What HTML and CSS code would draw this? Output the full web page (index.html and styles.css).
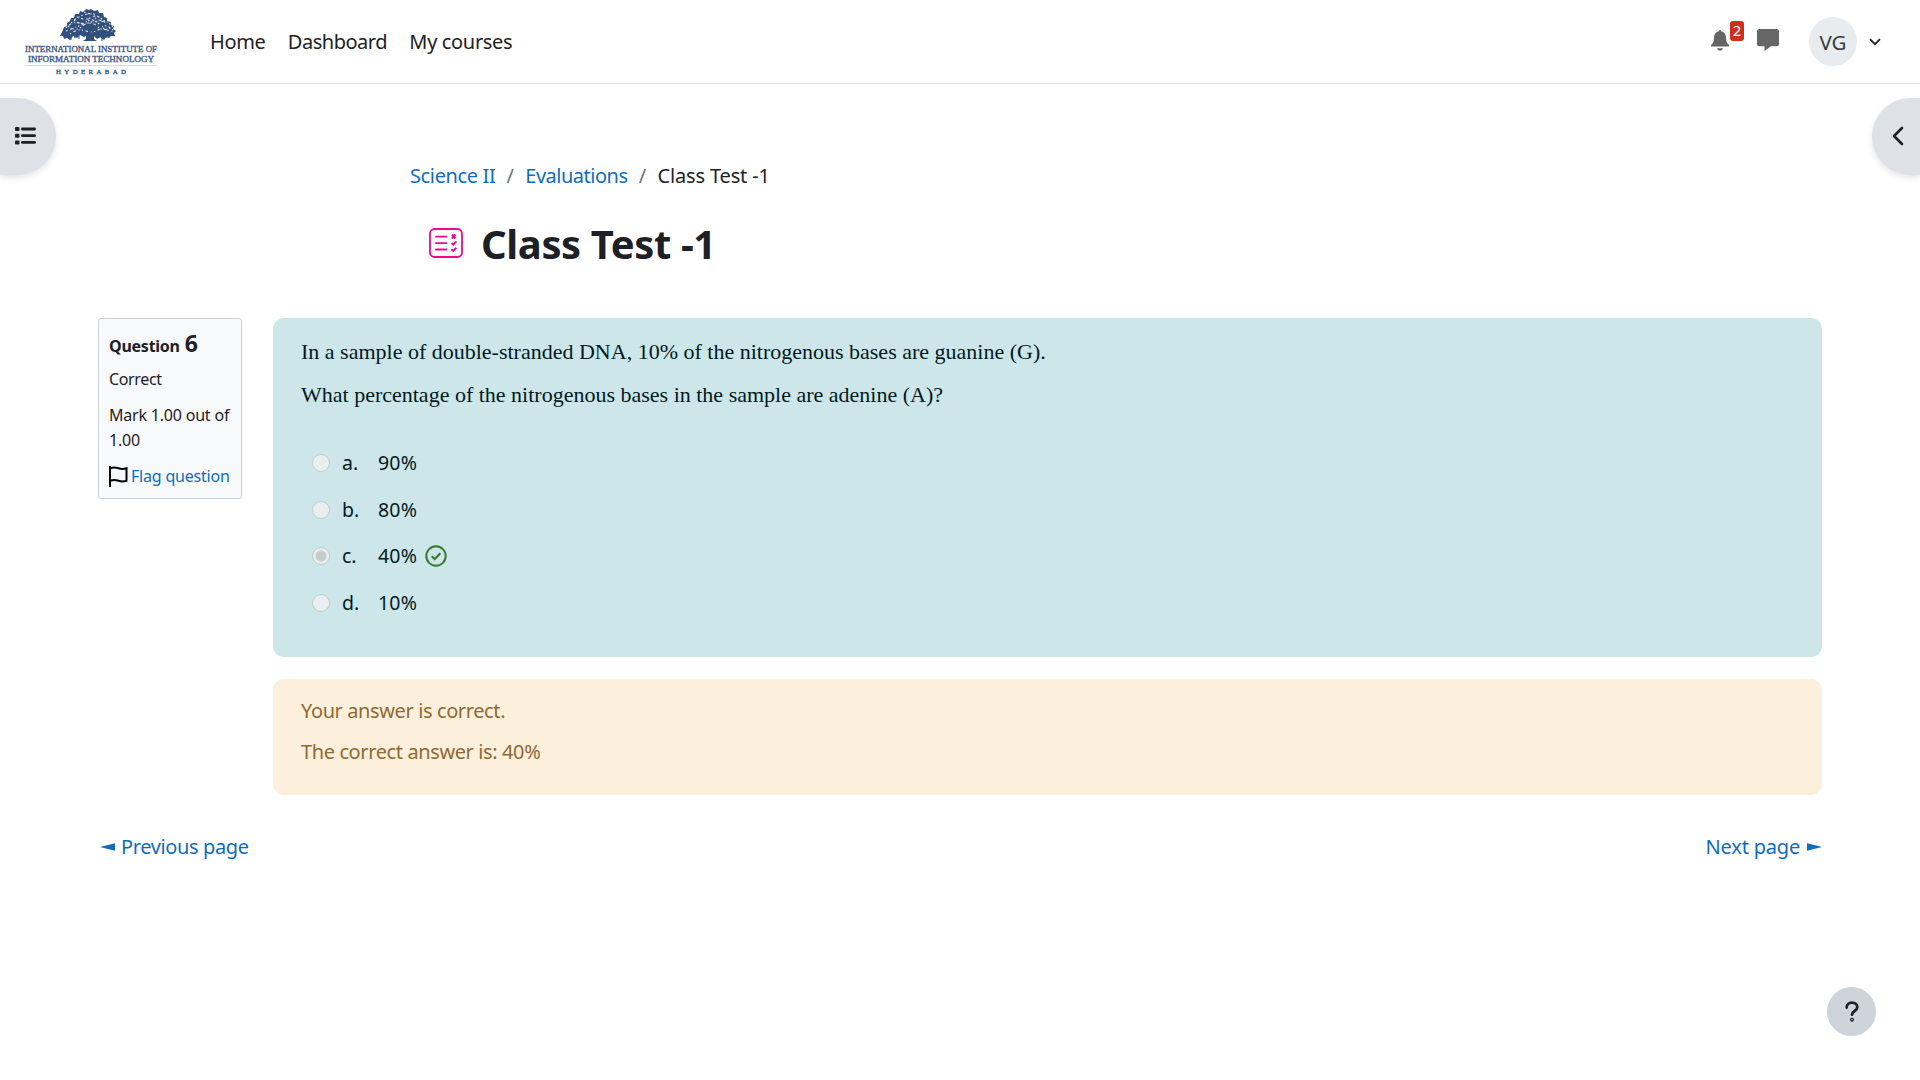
FILE: index.html
```
<!DOCTYPE html>
<html lang="en">
<head>
<meta charset="utf-8">
<title>Class Test -1</title>
<link rel="stylesheet" href="styles.css">
</head>
<body>
<header class="navbar">
  <a class="brand">
    <svg width="134" height="68" viewBox="24 8 134 68">
      <g fill="#33507c">
        <path d="M63 30l1-3 3-1v-3l3-2 1-3 3 0 1-4 4 0 1-3 3 1 3-3 3 1 2-1 3 2 4-1 1 3 4 0 1 4 3 1 0 3 4 1 0 3 3 1-1 3 3 2-2 2 1 3-4 0-2 2-3-1-2 3-4-3-3 2-3-3-3 1-3-2-4 2-4-2-3 3-4-2-3 4-3-2-3 1-1-3-3 0z"/>
        <path d="M80 30l4 3 2 2v-6h2l1 4 2-5 2 1-1 5 4-4 3 0-5 6 0 3 3 2h-14l3-2v-3l-2-3-5-2zM70.500 32v8h1v-8zM74.500 32v6h1v-6zM78.500 34v5h1v-5zM98.500 33v5h1v-5zM101.500 32v9h1v-9zM105.500 31v7h1v-7z"/>
      </g>
      <g fill="none" stroke="#dfe6ee" stroke-width="1.100" stroke-dasharray="1.500 2.500 2.500 3 1 2">
        <path d="M66 28q6-7 13-5t10-6M71 23q8-8 17-9t14 7M66 31q10-4 18-7t14 3 16-2M77 17q8 4 15 0t14 7M84 12q7 3 12 1M70 34q8-6 16-3t15-3 11 4M98 24q7-6 13 1M80 28q9-8 20-6M74 20q6 5 12 3M95 18q5 4 12 2M103 28q5 4 11 1M68 26q4 4 10 3M88 21q5-3 8 2"/>
      </g>
      <g class="logo-text">
        <text x="25" y="52" font-size="8.6" textLength="132" lengthAdjust="spacingAndGlyphs">INTERNATIONAL INSTITUTE OF</text>
        <text x="28" y="61.500" font-size="8.600" textLength="126" lengthAdjust="spacingAndGlyphs">INFORMATION TECHNOLOGY</text>
        <text x="56" y="74" font-size="6.800" textLength="70">HYDERABAD</text>
      </g>
      <path d="M25 65.500h132" stroke="#d5dbd8"/>
    </svg>
  </a>
  <nav class="menu">
    <a class="menu-home">Home</a><a class="menu-dash">Dashboard</a><a class="menu-courses">My courses</a>
  </nav>
  <div class="tools">
    <div class="bell">
      <svg width="20" height="22" viewBox="0 0 20 22" fill="#666"><path d="M10 0q1.200 0 1.200 1.300c3 .7 4.800 3 4.800 6.200 0 4 1 6 3 7.500v1.500H1V15c2-1.500 3-3.500 3-7.500C4 4.300 5.800 2 8.800 1.300Q8.800 0 10 0zM7 18.300h6q-.8 2.500-3 2.500t-3-2.500z"/></svg>
      <span class="badge">2</span>
    </div>
    <svg class="chat" width="22" height="22" viewBox="0 0 22 22" fill="#666"><path d="M2.500 0h17Q22 0 22 2.500v12.300q0 2.500-2.500 2.500H14L7.500 22v-4.700h-5Q0 17.300 0 14.800V2.500Q0 0 2.500 0z"/></svg>
    <div class="avatar">VG</div>
    <svg class="caret" width="12" height="8" viewBox="0 0 12 8" fill="none" stroke="#1d2125" stroke-width="1.700"><path d="M1 1.200l5 5 5-5"/></svg>
  </div>
</header>
<div class="drawers">
  <button class="drawer drawer-left"><svg width="21" height="18" viewBox="0 0 21 18" fill="#1d2125"><rect y="0" width="4.500" height="4" rx="1"/><rect y="6.700" width="4.500" height="4" rx="1"/><rect y="13.400" width="4.500" height="4" rx="1"/><rect x="6" y=".6" width="15" height="2.800" rx="1.400"/><rect x="6" y="7.300" width="15" height="2.800" rx="1.400"/><rect x="6" y="14" width="15" height="2.800" rx="1.400"/></svg></button>
  <button class="drawer drawer-right"><svg width="12" height="20" viewBox="0 0 12 20" fill="none" stroke="#1d2125" stroke-width="2.600" stroke-linecap="round" stroke-linejoin="round"><path d="M10 2L2 10l8 8"/></svg></button>
</div>
<div class="page-head">
  <div class="crumbs"><a class="crumb-course">Science II</a><span class="sep">/</span><a class="crumb-section">Evaluations</a><span class="sep">/</span><span class="crumb-page">Class Test -1</span></div>
  <div class="title">
    <svg width="34" height="30" viewBox="0 0 34 30" fill="none" stroke="#f7068b" stroke-width="1.800"><rect x="1" y="1" width="32" height="28" rx="4.500"/><path d="M7 8.700h10.500M7 15.200h10.500M7 21.500h10.500" stroke-linecap="round"/><path d="M23 6.500l3.500 4M26.500 6.500l-3.500 4M22.500 15l1.800 1.600 3-3.200M22.500 21.300l1.800 1.600 3-3.200" stroke-width="2"/></svg>
    <h1>Class Test -1</h1>
  </div>
</div>
<main class="question">
  <aside class="info">
    <h3><span class="label">Question</span><span class="no">6</span></h3>
    <p class="state">Correct</p>
    <p class="grade">Mark 1.00 out of<br>1.00</p>
    <a class="flag"><svg width="19" height="21" viewBox="0 0 19 21" fill="none" stroke="#000" stroke-width="2"><path d="M1 0v21M1 2.200q4.500-1.500 8.500 0t8 0v12.500q-4 1.500-8 0t-8.500 0"/></svg>Flag question</a>
  </aside>
  <div class="content">
    <section class="formulation">
      <p>In a sample of double-stranded DNA, 10% of the nitrogenous bases are guanine (G).</p>
      <p>What percentage of the nitrogenous bases in the sample are adenine (A)?</p>
      <div class="answers">
        <div class="row"><i class="radio"></i><span class="num">a.</span><span class="value">90%</span></div>
        <div class="row"><i class="radio"></i><span class="num">b.</span><span class="value">80%</span></div>
        <div class="row"><i class="radio checked"></i><span class="num">c.</span><span class="value">40%</span><svg class="tick" width="22" height="22" viewBox="0 0 22 22" fill="none" stroke="#357a32" stroke-width="2"><circle cx="11" cy="11" r="9.700"/><path d="M6.700 11.300l3 2.700 5.700-5.700" stroke-width="2.200"/></svg></div>
        <div class="row"><i class="radio"></i><span class="num">d.</span><span class="value">10%</span></div>
      </div>
    </section>
    <section class="feedback">
      <p>Your answer is correct.</p>
      <p>The correct answer is: 40%</p>
    </section>
  </div>
</main>
<div class="pager">
  <a class="prev"><svg width="15" height="8" viewBox="0 0 15 8" fill="#0f6cbf"><path d="M0 4L15 .3v7.400z"/></svg>Previous page</a>
  <a class="next">Next page<svg width="15" height="8" viewBox="0 0 15 8" fill="#0f6cbf"><path d="M15 4L0 .3v7.400z"/></svg></a>
</div>
<button class="help"><svg width="14" height="21" viewBox="0 0 14 21" fill="none" stroke="#1d2125" stroke-width="2.800" stroke-linecap="round"><path d="M1.700 6.500C1.700 3.500 4 1.700 7 1.700s5.300 1.800 5.300 4.500c0 3.800-5.300 3.800-5.300 7.500"/><circle cx="7" cy="18.800" r=".6"/></svg></button>
</body>
</html>
```
FILE: styles.css
```
* { box-sizing: border-box; }
html, body { height: 100%; }
body { margin: 0; background: #fff; color: #1d2125; font: 20px/30px "Noto Sans", "Open Sans", sans-serif; display: flex; flex-direction: column; overflow: hidden; white-space: nowrap; }
a { color: #0f6cbf; text-decoration: none; }
p, h1, h3 { margin: 0; }
button { border: 0; padding: 0; }
svg { display: block; flex: none; }

.navbar { height: 84px; border-bottom: 1px solid #dee2e6; display: flex; align-items: center; padding: 0 39px 0 24px; flex: none; }
.logo-text { font-family: "Liberation Serif", serif; fill: #3f5a82; stroke: #3f5a82; stroke-width: .35px; }
.menu { display: flex; margin-left: 52px; gap: 22.300px; }
.menu a { color: #1d2125; }
.menu-home { letter-spacing: -.35px; }
.menu-dash { letter-spacing: -.48px; }
.menu-courses { letter-spacing: -.34px; }
.tools { display: flex; align-items: center; margin-left: auto; }
.bell { position: relative; margin: -2px 27px 0 0; }
.badge { position: absolute; left: 20px; top: -9px; width: 14px; height: 20px; border-radius: 3px; background: #ca3120; color: #fff; font-size: 15px; line-height: 19px; text-align: center; }
.chat { margin: -3px 30px 0 0; }
.avatar { width: 48px; height: 49px; border-radius: 50%; background: #e9ecef; color: #343a40; font-size: 20.500px; display: flex; align-items: center; justify-content: center; margin-right: 12px; }

.drawers { display: flex; justify-content: space-between; margin-top: 14px; flex: none; }
.drawer { height: 77px; background: #dee2e6; box-shadow: 0 3px 6px rgba(0, 0, 0, .1); display: flex; align-items: center; }
.drawer-left { width: 56px; border-radius: 0 38.5px 38.5px 0; padding: 0 0 1px 15px; }
.drawer-right { width: 48px; border-radius: 38.5px 0 0 38.5px; padding: 0 0 1px 20px; }

.page-head { width: 1100px; margin: -14px auto 0; flex: none; }
.crumbs { display: flex; height: 30px; }
.crumb-course { letter-spacing: -.37px; }
.crumb-section { letter-spacing: -.5px; }
.crumb-page { letter-spacing: -.15px; }
.sep { width: 30px; text-align: center; color: #6a737b; }
.title { display: flex; align-items: center; margin-top: 23px; padding-left: 19px; height: 60px; gap: 18px; }
.title svg { margin-top: -2px; }
h1 { font-size: 40px; line-height: 60px; font-weight: 700; letter-spacing: -.38px; }

.question { display: flex; gap: 31px; align-items: flex-start; padding: 0 98px; margin-top: 44px; flex: none; }
.info { width: 144px; height: 181px; border: 1px solid #cad0d7; border-radius: 3px; background: #f8f9fa; padding: 9px 10px; font-size: 16px; line-height: 25px; letter-spacing: -.2px; }
h3 { display: flex; align-items: baseline; font-size: 16px; line-height: 30px; gap: 5px; letter-spacing: -.25px; }
.no { font-size: 23px; }
.state { margin-top: 6px; letter-spacing: -.35px; }
.grade { margin-top: 11px; }
.flag { display: flex; align-items: center; gap: 3px; margin-top: 11px; }

.content { flex: 1; }
.formulation { height: 339px; background: #cde6ea; border-radius: 11px; padding: 18px 28px; color: #001a1e; }
.formulation p { font: 22px/32px "Liberation Serif", serif; margin-bottom: 10.600px; }
.answers { margin-top: 29px; padding-left: 10.600px; font-size: 19.500px; }
.row { display: flex; align-items: center; height: 46.700px; }
.radio { width: 18px; height: 18px; border: 1px solid #c3cccd; border-radius: 50%; background: #e7eff1; margin-right: 12.400px; }
.checked { background: radial-gradient(circle, #c5cccd 5px, #e7eff1 6px); }
.num { width: 36px; }
.value { letter-spacing: .2px; }
.tick { margin-left: 7.500px; }
.feedback { height: 116px; background: #fcefdc; border-radius: 11px; margin-top: 22px; padding: 17px 28px; color: #8f6a32; letter-spacing: -.39px; }
.feedback p { margin-bottom: 11px; }

.pager { display: flex; justify-content: space-between; padding: 0 98px 0 100px; margin-top: 37px; flex: none; }
.pager a { display: flex; align-items: center; }
.prev { gap: 6px; letter-spacing: -.38px; }
.next { gap: 7px; letter-spacing: -.2px; }
.help { width: 49px; height: 49px; border-radius: 50%; background: #ced4da; display: flex; align-items: center; justify-content: center; margin: auto 44px 44px auto; flex: none; }
```
